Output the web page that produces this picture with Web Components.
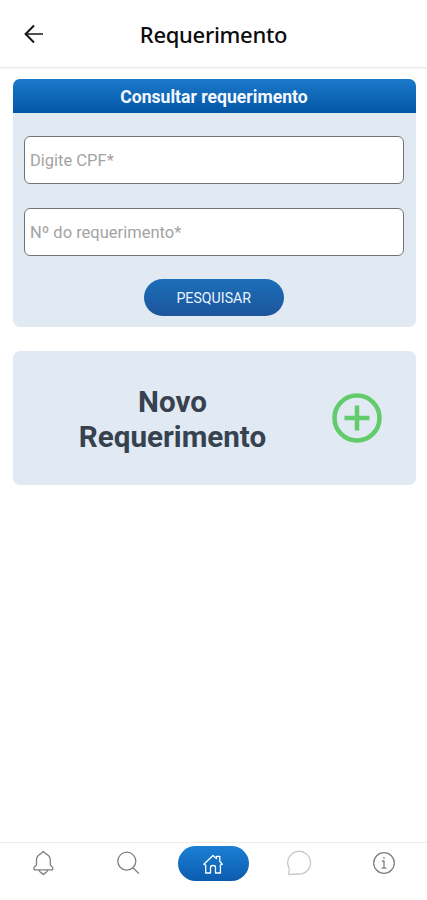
<!DOCTYPE html>
<html lang="pt-BR">
<head>
<meta charset="utf-8">
<title>Requerimento</title>
<style>
html, body { margin: 0; height: 100%; background: #fff; }
body { font-family: Roboto, "Liberation Sans", sans-serif; overflow: hidden; }
</style>
</head>
<body>
<req-app></req-app>
<script>
const define = (name, html) => {
  const t = document.createElement('template');
  t.innerHTML = html;
  customElements.define(name, class extends HTMLElement {
    constructor() {
      super();
      this.attachShadow({ mode: 'open' }).append(t.content.cloneNode(true));
    }
  });
};

define('app-header', `
<style>
:host { display: grid; grid-template-columns: 68px 1fr 68px; align-items: center; height: 67px; box-shadow: 0 1px 2px #00000020; background: #fff; flex: none; }
svg { display: block; margin-left: 24px; margin-top: 1px; }
h1 { margin: 1px 0 0; text-align: center; font: 500 22px/30px "Noto Sans", sans-serif; letter-spacing: -0.3px; color: #0c0c0c; }
</style>
<svg width="20" height="20" viewBox="0 0 20 20" fill="none" stroke="#161616"><path d="M2 10H19" stroke-width="1.5"/><path d="M10 1.5L1.6 10L10 18.5" stroke-width="2"/></svg>
<h1><slot></slot></h1>`);

define('search-card', `
<style>
:host { display: flex; flex-direction: column; height: 248px; border-radius: 7px; overflow: hidden; background: #e1e9f3; }
header { height: 34px; flex: none; background: linear-gradient(#1c79cb, #0356a4); color: #f4f9ff; text-align: center; font: 700 17.6px/36px Roboto, sans-serif; }
div { display: flex; flex-direction: column; align-items: center; padding: 23px 11.5px 0 11px; }
</style>
<header><slot name="title"></slot></header>
<div><slot></slot></div>`);

define('text-field', `
<style>
:host { display: flex; align-items: center; align-self: stretch; height: 48px; box-sizing: border-box; margin-bottom: 23.5px; padding: 1px 5.5px 0; border: 1.5px solid #70747a; border-radius: 6px; background: #fff; color: #a3a3a3; font-size: 16.5px; }
</style>
<span><slot></slot></span>`);

define('pill-button', `
<style>
:host { display: block; width: 140px; height: 37px; }
button { all: unset; display: block; width: 100%; height: 100%; border-radius: 19px; background: linear-gradient(#1c6fba, #1c559b); text-align: center; color: #eaf3fd; font: 400 14.2px/39px Roboto, sans-serif; }
</style>
<button><slot></slot></button>`);

define('new-card', `
<style>
:host { display: grid; grid-template-columns: 319px 1fr; align-items: center; height: 134px; border-radius: 7px; background: #e1e9f3; }
h2 { margin: 4px 0 0; padding-left: 1px; text-align: center; font: 700 29.6px/35px Roboto, sans-serif; color: #36424f; }
svg { display: block; }
</style>
<h2><slot></slot></h2>
<svg width="50" height="50" viewBox="0 0 50 50" fill="none" stroke="#62cb6b"><circle cx="25" cy="25" r="22.5" stroke-width="4.5"/><path d="M12.5 25H37.5M25 12.5V37.5" stroke-width="4.5"/></svg>`);

define('tab-item', `
<style>
:host { display: flex; justify-content: center; align-items: center; height: 35px; color: #808080; }
:host([faded]) { color: #c9c9c9; }
:host([active]) { color: #fff; }
span { display: flex; justify-content: center; align-items: center; height: 35px; padding-bottom: 2px; box-sizing: border-box; }
:host([active]) span { width: 71px; padding-bottom: 0; border-radius: 18px; background: linear-gradient(#1c80d4, #0b5caf); }
</style>
<span><slot></slot></span>`);

define('tab-bar', `
<style>
:host { display: grid; grid-template-columns: repeat(5, 1fr); height: 58px; box-sizing: border-box; padding-top: 3px; border-top: 1px solid #ededed; background: #fff; flex: none; }
svg { display: block; fill: none; stroke: currentColor; stroke-width: 1.3; stroke-linejoin: round; stroke-linecap: round; }
</style>
<tab-item><svg width="26" height="26" viewBox="0 0 26 26"><path d="M13.3 1.5L11.3 3.3C8.2 4.8 6.5 6.8 6.5 10V15L4 17.4V19.8H22.7V17.4L20.3 15V10C20.3 6.8 18.5 4.8 15.3 3.3ZM8.8 20C9.8 22.5 12 23 13.4 24.5C14.8 23 17 22.5 18 20"/></svg></tab-item>
<tab-item><svg width="24" height="24" viewBox="0 0 24 24"><circle cx="10.8" cy="10.2" r="9"/><path d="M17 16.8L22.5 22.3"/></svg></tab-item>
<tab-item active><svg width="22" height="22" viewBox="0 0 22 22"><path d="M3.7 12L1.8 11.3L11 2.5L14.5 5.5V3.3H17.8V8.5L20.3 11.3L18.4 12V20H13.5V14.3C13.5 13 12.7 12.5 11 12.5S8.500 13 8.500 14.300V20H3.700Z"/></svg></tab-item>
<tab-item faded><svg width="26" height="26" viewBox="0 0 26 26"><path d="M2.5 24.5L3.3 18.5A11.400 11.400 0 1 1 11.500 24Z"/></svg></tab-item>
<tab-item><svg width="24" height="24" viewBox="0 0 24 24"><circle cx="12" cy="12" r="10.300"/><path d="M12 6.300V7.300M10.300 10H12V17M10 17.200H14"/></svg></tab-item>`);

define('req-app', `
<style>
:host { display: flex; flex-direction: column; height: 900px; }
main { flex: 1; display: flex; flex-direction: column; gap: 24px; padding: 12px 11.5px 0 12.5px; }
</style>
<app-header>Requerimento</app-header>
<main>
  <search-card>
    <span slot="title">Consultar requerimento</span>
    <text-field>Digite CPF*</text-field>
    <text-field>Nº do requerimento*</text-field>
    <pill-button>PESQUISAR</pill-button>
  </search-card>
  <new-card>Novo<br>Requerimento</new-card>
</main>
<tab-bar></tab-bar>`);
</script>
</body>
</html>
